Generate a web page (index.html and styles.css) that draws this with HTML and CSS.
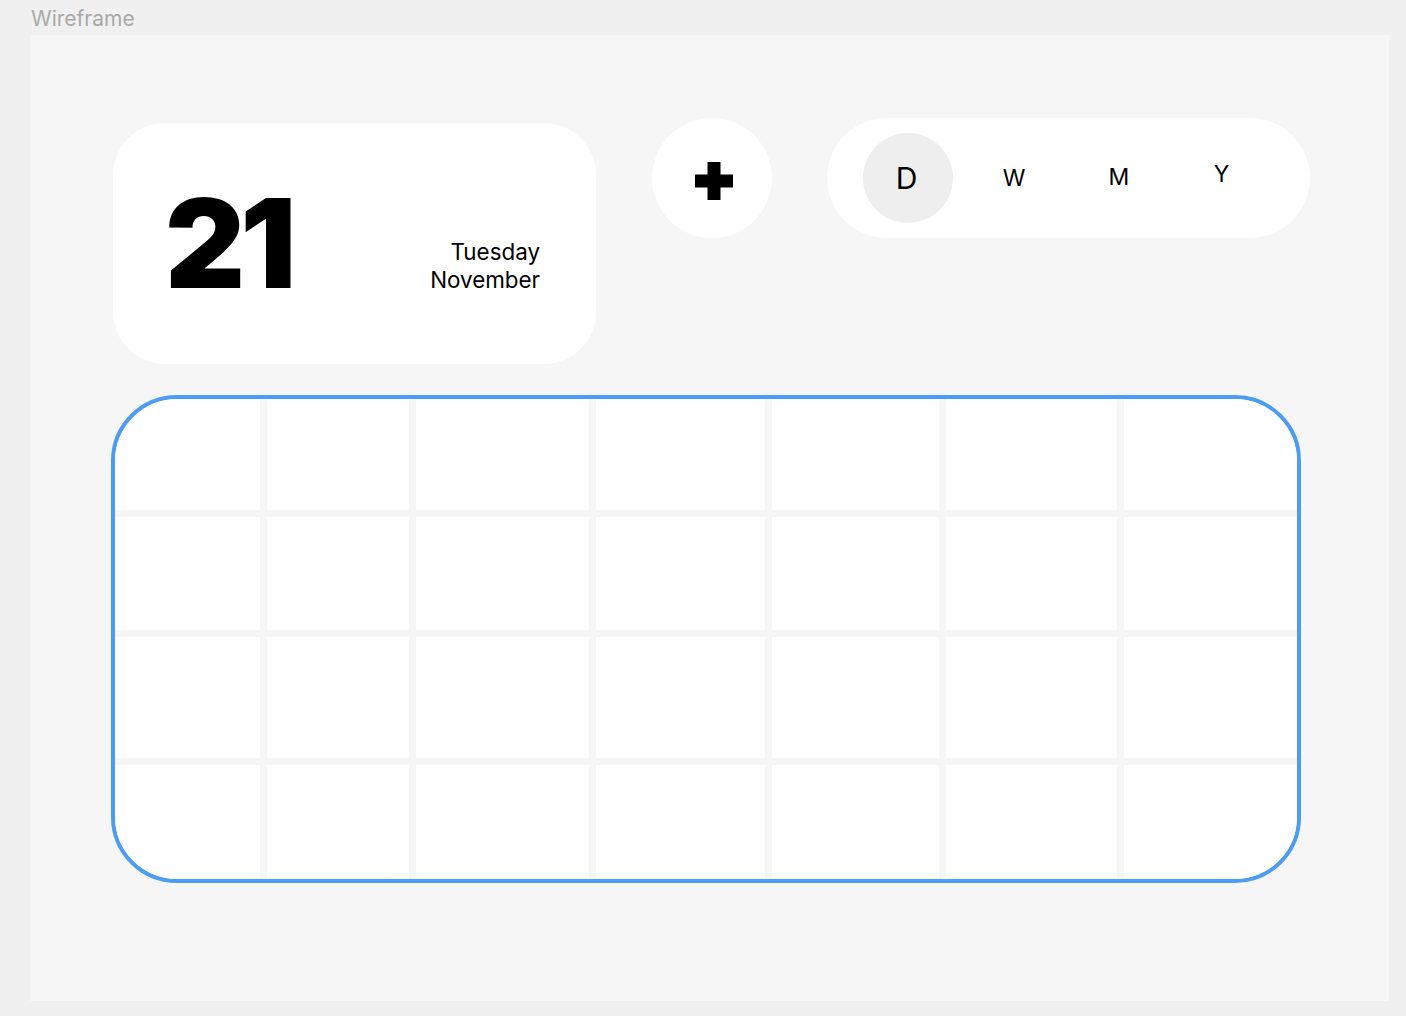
FILE: index.html
```html
<!DOCTYPE html>
<html>
<head>
<meta charset="utf-8">
<link rel="stylesheet" href="styles.css">
</head>
<body>
<div class="label">Wireframe</div>
<div class="frame">
  <div class="top">
    <div class="date-card">
      <div class="day">21</div>
      <div class="date-text">
        <div>Tuesday</div>
        <div>November</div>
      </div>
    </div>
    <div class="add-btn">
      <svg width="40" height="40" viewBox="0 0 40 40"><rect x="13.5" y="1" width="13" height="38" fill="#000"/><rect x="1" y="13.5" width="38" height="13" fill="#000"/></svg>
    </div>
    <div class="range">
      <div class="seg seg-active">D</div>
      <div class="seg seg-w">W</div>
      <div class="seg seg-m">M</div>
      <div class="seg seg-y">Y</div>
    </div>
  </div>
  <div class="grid">
    <div class="cell"></div><div class="cell"></div><div class="cell"></div><div class="cell"></div><div class="cell"></div><div class="cell"></div><div class="cell"></div>
    <div class="cell"></div><div class="cell"></div><div class="cell"></div><div class="cell"></div><div class="cell"></div><div class="cell"></div><div class="cell"></div>
    <div class="cell"></div><div class="cell"></div><div class="cell"></div><div class="cell"></div><div class="cell"></div><div class="cell"></div><div class="cell"></div>
    <div class="cell"></div><div class="cell"></div><div class="cell"></div><div class="cell"></div><div class="cell"></div><div class="cell"></div><div class="cell"></div>
  </div>
</div>
</body>
</html>
```

FILE: styles.css
```css
* { box-sizing: border-box; }
html, body {
  margin: 0;
  padding: 0;
  background: #f0f0f0;
  font-family: Inter, "Noto Sans", sans-serif;
  color: #000;
}
body {
  width: 1406px;
  height: 1016px;
  overflow: hidden;
}
.label {
  height: 35px;
  line-height: 37px;
  padding-left: 31px;
  font-size: 21px;
  color: #a9a9a9;
}
.frame {
  margin-left: 30px;
  width: 1359px;
  height: 966px;
  background: #f6f6f6;
  padding: 83px 0 0 81px;
}
.top {
  display: flex;
  align-items: flex-start;
}
.date-card {
  margin: 5px 0 0 2px;
  width: 483px;
  height: 241px;
  background: #fff;
  border-radius: 52px;
  display: flex;
  justify-content: space-between;
  align-items: flex-end;
  padding: 0 56px 59px 52px;
}
.day {
  font-size: 124px;
  font-weight: 900;
  line-height: 1;
  letter-spacing: -5px;
}
.date-text {
  text-align: right;
  font-size: 22.4px;
  line-height: 28px;
  margin-bottom: 11px;
}
.add-btn {
  margin-left: 56px;
  width: 120px;
  height: 120px;
  border-radius: 50%;
  background: #fff;
  display: flex;
  align-items: center;
  justify-content: center;
  padding: 6px 0 0 4px;
}
.range {
  margin-left: 55px;
  width: 483px;
  height: 120px;
  border-radius: 60px;
  background: #fff;
  display: flex;
  align-items: center;
  padding-left: 36px;
  gap: 15px;
}
.seg {
  width: 90px;
  height: 90px;
  border-radius: 50%;
  display: flex;
  align-items: center;
  justify-content: center;
  font-size: 23px;
}
.seg-active {
  background: #eeeeee;
  font-size: 30px;
  padding-right: 3px;
}
.seg-w { padding-left: 2px; }
.seg-m { margin-bottom: 3px; padding-left: 2px; }
.seg-y { margin-bottom: 9px; padding-right: 3px; }
.grid {
  margin-top: 31px;
  width: 1190px;
  height: 488px;
  border: 4px solid #4a9cf6;
  border-radius: 66px;
  overflow: hidden;
  background: #f6f6f6;
  display: grid;
  grid-template-columns: 145px 142px 173px 169px 167px 171px 173px;
  grid-template-rows: 111px 113px 121px 114px;
  gap: 7px;
}
.cell {
  background: #fff;
}
```
